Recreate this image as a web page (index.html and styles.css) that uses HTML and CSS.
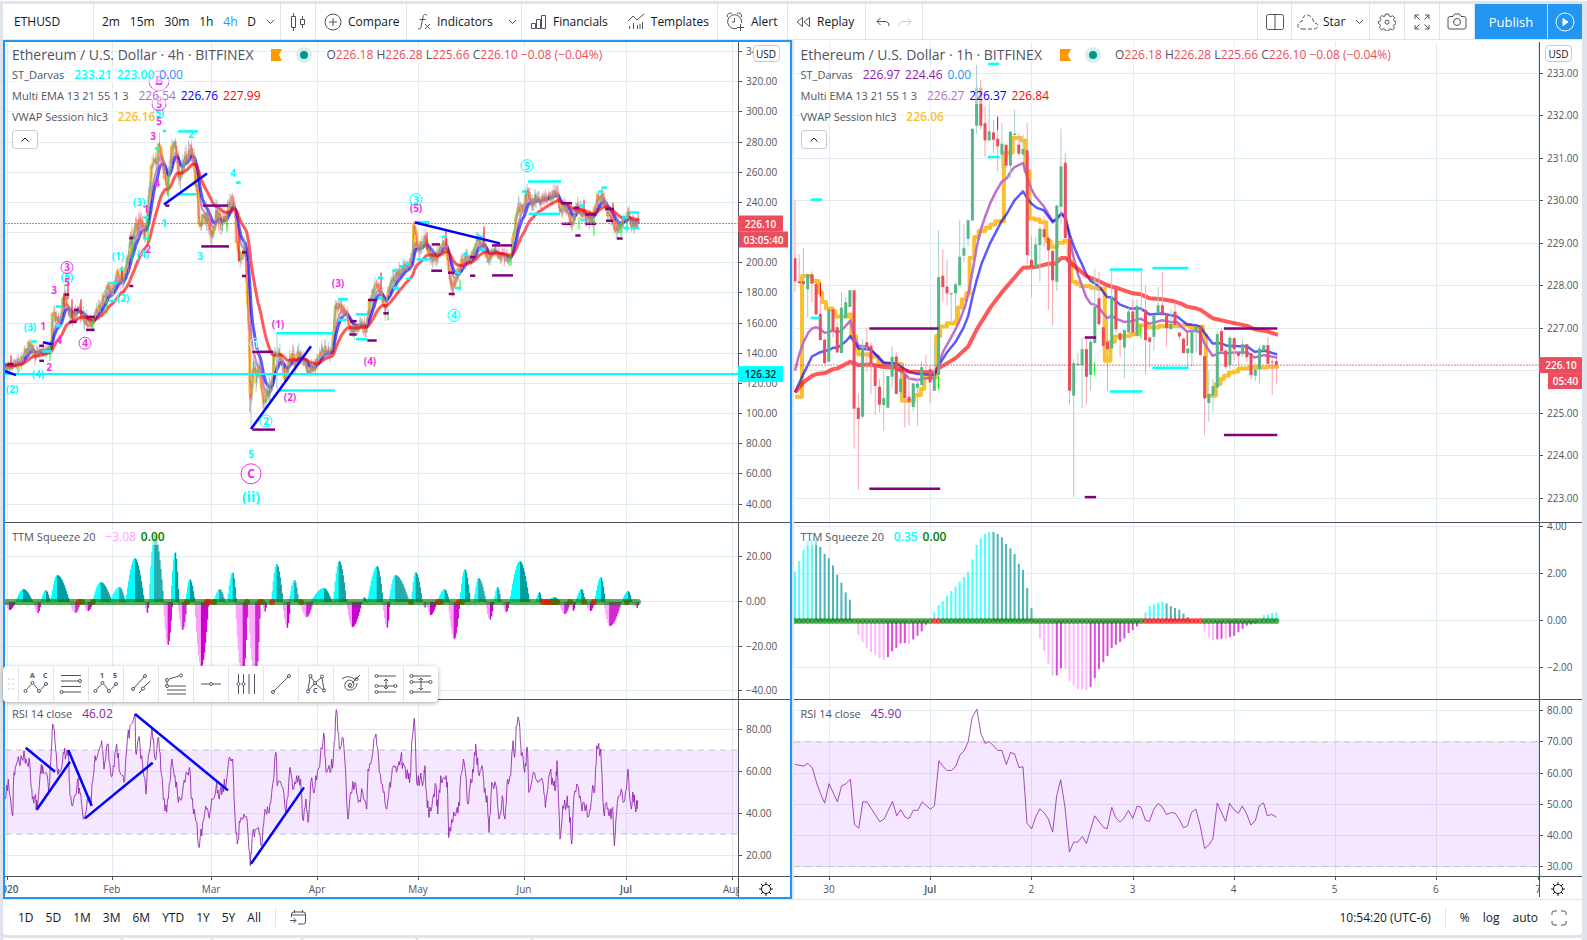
FILE: index.html
```html
<!DOCTYPE html>
<html lang="en">
<head>
    <meta charset="UTF-8">
    <meta name="viewport" content="width=device-width, initial-scale=1.0">
    <title>ETHUSD 226.10</title>
    <link rel="stylesheet" href="styles.css">
</head>
<body>
    <header class="toolbar">
        <div class="group symbol"><button>ETHUSD</button></div>
        <div class="group intervals">
            <button>2m</button>
            <button>15m</button>
            <button>30m</button>
            <button>1h</button>
            <button class="active">4h</button>
            <button>D</button>
            <button aria-label="More intervals"><svg width="9" height="6" viewBox="0 0 9 6"><path d="M1 1l3.500 3.500L8 1"/></svg></button>
        </div>
        <div class="group square">
            <button aria-label="Chart style"><svg width="16" height="20" viewBox="0 0 16 20"><path d="M3.500 1v3M3.500 16v3M12.500 4v3M12.500 13v3M1.500 4.500h4v11h-4zM10.500 7.500h4v5h-4z"/></svg></button>
        </div>
        <div class="group compare">
            <button><svg width="18" height="18" viewBox="0 0 18 18"><circle cx="9" cy="9" r="8"/><path d="M9 5v8M5 9h8"/></svg>Compare</button>
        </div>
        <div class="group indicators">
            <button><svg width="14" height="18" viewBox="0 0 14 18"><path d="M10 2.500C8 .5 6.500 1.500 6 4L4 14c-.5 2-1.500 2.500-3 1.500M2.500 6.500h6M8 11l5 5M13 11l-5 5"/></svg>Indicators</button>
            <button aria-label="Favorite indicators"><svg width="9" height="6" viewBox="0 0 9 6"><path d="M1 1l3.500 3.500L8 1"/></svg></button>
        </div>
        <div class="group wide">
            <button><svg width="17" height="16" viewBox="0 0 17 16"><path d="M1.500 9.500h4v5h-4zM6.500 5.500h4v9h-4zM11.500 1.500h4v13h-4z"/></svg>Financials</button>
            <button><svg width="18" height="17" viewBox="0 0 18 17"><path d="M1 8l5-5 4 4 7-6M2.500 13v3M6.500 10v6M10.500 12v4M15.500 9v7M13 11v5"/></svg>Templates</button>
        </div>
        <div class="group alert">
            <button><svg width="19" height="19" viewBox="0 0 19 19"><path d="M11 16.300A7 7 0 1 1 15.500 11M8.500 6v4H6M1.500 5A3 3 0 0 1 6 1.500M11 1.500A3 3 0 0 1 15.500 5M14.500 12v7M11 15.500h7"/></svg>Alert</button>
        </div>
        <div class="group replay">
            <button><svg width="15" height="12" viewBox="0 0 15 12"><path d="M6.500 1.500v9L1 6zM13.500 1.500v9L8 6z"/></svg>Replay</button>
        </div>
        <div class="group history">
            <button aria-label="Undo"><svg width="14" height="10" viewBox="0 0 14 10"><path d="M4.500 1L1 4.500 4.500 8M1 4.500h8c2.500 0 4 1.500 4 4.500"/></svg></button>
            <button class="off" aria-label="Redo"><svg width="14" height="10" viewBox="0 0 14 10"><path d="M9.500 1L13 4.500 9.500 8M13 4.500H5C2.500 4.500 1 6 1 9"/></svg></button>
        </div>
        <div class="spacer"></div>
        <div class="group square">
            <button aria-label="Select layout"><svg width="18" height="16" viewBox="0 0 18 16"><rect x=".5" y=".5" width="17" height="15" rx="2"/><path d="M9 1v14"/></svg></button>
        </div>
        <div class="group layout">
            <button><svg width="22" height="16" viewBox="0 0 22 16" stroke-dasharray="4 2"><path d="M5 15h12c6-1 5-6 0-6C16 4 13 1 10 1S5 4 5.500 7C0 8-1 14 5 15z"/></svg>Star</button>
            <button aria-label="Layouts"><svg width="9" height="6" viewBox="0 0 9 6"><path d="M1 1l3.500 3.500L8 1"/></svg></button>
        </div>
        <div class="group square">
            <button aria-label="Chart settings"><svg width="18" height="18" viewBox="0 0 18 18"><path d="M7.500 1h3l.6 2 1.500.7 2-1 2 2-1 2 .6 1.400 1.800.6v2l-1.900.8-.6 1.400 1 2-2 2-2-1-1.400.6-.6 1.500h-3l-.6-1.700-1.500-.6-2 1-2-2 1-2-.6-1.400L.5 10.500v-2l1.800-.7.6-1.300-1-2 2-2 2 1L7 3zM11 9.200a2 2 0 1 1-4 0 2 2 0 0 1 4 0z"/></svg></button>
        </div>
        <div class="group square">
            <button aria-label="Fullscreen"><svg width="16" height="16" viewBox="0 0 16 16"><path d="M1 5V1h4M1 1l4.500 4.500M11 1h4v4M15 1l-4.500 4.500M1 11v4h4M1 15l4.500-4.500M15 11v4h-4M15 15l-4.500-4.500"/></svg></button>
        </div>
        <div class="group square">
            <button aria-label="Take a snapshot"><svg width="20" height="17" viewBox="0 0 20 17"><path d="M3 3.500h3L7.500 1h5L14 3.500h3a2 2 0 0 1 2 2V14a2 2 0 0 1-2 2H3a2 2 0 0 1-2-2V5.500a2 2 0 0 1 2-2z"/><circle cx="10" cy="9" r="3.500"/></svg></button>
        </div>
        <button class="publish">Publish</button>
        <button class="publish play" aria-label="Start stream"><svg width="20" height="20" viewBox="0 0 20 20"><circle cx="10" cy="10" r="9"/><path d="M8 6.500v7l5-3.500z" fill="#fff"/></svg></button>
    </header>

    <main class="charts">
        <section class="chart selected" id="left">
            <div class="pane price">
                <svg class="plot"></svg>
                <div class="legend">
                    <div class="title-row">
                        <h2>Ethereum / U.S. Dollar · 4h · BITFINEX</h2>
                        <svg width="11" height="12" viewBox="0 0 11 12"><path d="M0 0h11L8 6l3 6H0z" fill="#ff9800"/></svg>
                        <i class="status"></i>
                        <p class="ohlc">O<b>226.18</b> H<b>226.28</b> L<b>225.66</b> C<b>226.10</b> <b>−0.08 (−0.04%)</b></p>
                    </div>
                    <p>ST_Darvas <span class="aqua strong first">233.21</span> <span class="aqua strong">223.00</span> <span class="blue">0.00</span></p>
                    <p>Multi EMA 13 21 55 1 3 <span class="violet first">226.54</span> <span class="navy">226.76</span> <span class="red">227.99</span></p>
                    <p>VWAP Session hlc3 <span class="gold strong first">226.16</span></p>
                    <button class="fold" aria-label="Collapse legend"><svg width="8" height="5" viewBox="0 0 8 5"><path d="M.5 4.500L4 1l3.500 3.500"/></svg></button>
                </div>
                <button class="currency">USD</button>
            </div>
            <div class="pane">
                <svg class="plot"></svg>
                <div class="legend"><p>TTM Squeeze 20 <span class="pink first">−3.08</span> <span class="green strong">0.00</span></p></div>
            </div>
            <div class="pane">
                <svg class="plot"></svg>
                <div class="legend"><p>RSI 14 close <span class="purple first">46.02</span></p></div>
            </div>
            <div class="pane time">
                <svg class="plot"></svg>
                <button class="gear" aria-label="Axis settings"><svg width="14" height="14" viewBox="0 0 14 14"><circle cx="7" cy="7" r="4.500"/><path d="M7 0v2.500M7 11.500V14M0 7h2.500M11.500 7H14M2 2l2 2M10 10l2 2M12 2l-2 2M4 10l-2 2"/></svg></button>
            </div>
        </section>
        <section class="chart" id="right">
            <div class="pane price">
                <svg class="plot"></svg>
                <div class="legend">
                    <div class="title-row">
                        <h2>Ethereum / U.S. Dollar · 1h · BITFINEX</h2>
                        <svg width="11" height="12" viewBox="0 0 11 12"><path d="M0 0h11L8 6l3 6H0z" fill="#ff9800"/></svg>
                        <i class="status"></i>
                        <p class="ohlc">O<b>226.18</b> H<b>226.28</b> L<b>225.66</b> C<b>226.10</b> <b>−0.08 (−0.04%)</b></p>
                    </div>
                    <p>ST_Darvas <span class="purple first">226.97</span> <span class="purple">224.46</span> <span class="blue">0.00</span></p>
                    <p>Multi EMA 13 21 55 1 3 <span class="violet first">226.27</span> <span class="navy">226.37</span> <span class="red">226.84</span></p>
                    <p>VWAP Session hlc3 <span class="gold strong first">226.06</span></p>
                    <button class="fold" aria-label="Collapse legend"><svg width="8" height="5" viewBox="0 0 8 5"><path d="M.5 4.500L4 1l3.500 3.500"/></svg></button>
                </div>
                <button class="currency">USD</button>
            </div>
            <div class="pane">
                <svg class="plot"></svg>
                <div class="legend"><p>TTM Squeeze 20 <span class="aqua strong first">0.35</span> <span class="green strong">0.00</span></p></div>
            </div>
            <div class="pane">
                <svg class="plot"></svg>
                <div class="legend"><p>RSI 14 close <span class="purple first">45.90</span></p></div>
            </div>
            <div class="pane time">
                <svg class="plot"></svg>
                <button class="gear" aria-label="Axis settings"><svg width="14" height="14" viewBox="0 0 14 14"><circle cx="7" cy="7" r="4.500"/><path d="M7 0v2.500M7 11.500V14M0 7h2.500M11.500 7H14M2 2l2 2M10 10l2 2M12 2l-2 2M4 10l-2 2"/></svg></button>
            </div>
        </section>

        <!-- floating favorites toolbar -->
        <div class="drawing-tools">
            <span class="handle"><svg width="6" height="12" viewBox="0 0 6 12"><path d="M0 1h2M4 1h2M0 6h2M4 6h2M0 11h2M4 11h2" stroke="#c1c4cd"/></svg></span>
            <button aria-label="Elliott correction wave"><svg width="26" height="22" viewBox="0 0 26 22"><path d="M3.500 16.500L8 11.500M11 11.500l4 5M18 16.500l4-4.500"/><circle cx="2.500" cy="18" r="1.500"/><circle cx="9.500" cy="10" r="1.500"/><circle cx="16" cy="18" r="1.500"/><circle cx="23" cy="11" r="1.500"/><text x="7" y="5">A</text><text x="20" y="5">C</text></svg></button>
            <button aria-label="Fib retracement"><svg width="24" height="20" viewBox="0 0 24 20"><path d="M2 1.500h20M2 7h18M2 12.500h20M4 18h18"/><circle cx="21" cy="7" r="1.500"/><circle cx="2.500" cy="18" r="1.500"/></svg></button>
            <button aria-label="Elliott impulse wave"><svg width="26" height="22" viewBox="0 0 26 22"><path d="M3.500 16.500L8 11.500M11 11.500l4 5M18 16.500l4-4.500"/><circle cx="2.500" cy="18" r="1.500"/><circle cx="9.500" cy="10" r="1.500"/><circle cx="16" cy="18" r="1.500"/><circle cx="23" cy="11" r="1.500"/><text x="7" y="5">1</text><text x="20" y="5">5</text></svg></button>
            <button aria-label="Parallel channel"><svg width="20" height="20" viewBox="0 0 20 20"><path d="M3 14L13 3M8 19l3-3M13 13l6-6"/><circle cx="2" cy="15" r="1.500"/><circle cx="14" cy="2" r="1.500"/><circle cx="12" cy="14.500" r="1.500"/></svg></button>
            <button aria-label="Trend based fib"><svg width="22" height="22" viewBox="0 0 22 22"><path d="M4 6l10-3M2 8.500v3M4 13h17M2 17h19M2 21h19"/><circle cx="2" cy="7" r="1.500"/><circle cx="16" cy="2.500" r="1.500"/><circle cx="2" cy="13" r="1.500"/></svg></button>
            <button aria-label="Horizontal line"><svg width="20" height="6" viewBox="0 0 20 6"><path d="M0 3h8M12 3h8"/><circle cx="10" cy="3" r="1.500"/></svg></button>
            <button aria-label="Fib time zone"><svg width="20" height="20" viewBox="0 0 20 20"><path d="M2.500 0v8M2.500 12v8M7.500 0v8M7.500 12v8M13 0v20M18.500 0v20"/><circle cx="2.500" cy="10" r="1.500"/><circle cx="7.500" cy="10" r="1.500"/></svg></button>
            <button aria-label="Trend line"><svg width="20" height="20" viewBox="0 0 20 20"><path d="M3 17L17 3"/><circle cx="2" cy="18" r="1.500"/><circle cx="18" cy="2" r="1.500"/></svg></button>
            <button aria-label="Cypher pattern"><svg width="20" height="20" viewBox="0 0 20 20"><path d="M2 16L4 3.500M5 3l3.500 5M10 8l5-4M16 4l2 12M3 16l5-6M17 16l-7-6"/><circle cx="2" cy="17.500" r="1.500"/><circle cx="4.500" cy="2" r="1.500"/><circle cx="9" cy="9" r="1.500"/><circle cx="16" cy="2.500" r="1.500"/><circle cx="18" cy="16.500" r="1.500"/><text x="7" y="19">C</text></svg></button>
            <button aria-label="Fib spiral"><svg width="20" height="20" viewBox="0 0 20 20"><path d="M1 5c5-4 11-2 13 1M19 1l-8 8M10 10c-1-2-4 1-2 3s5 0 5-3-4-5-7-3-3 8 1 9 9-2 9-7"/><circle cx="9" cy="11" r="1.500"/><circle cx="15.500" cy="5" r="1.500"/></svg></button>
            <button aria-label="Long position"><svg width="24" height="20" viewBox="0 0 24 20"><path d="M4 2h18M4 12h16M4 18h18M12 5v10M10 7l2-2 2 2M10 13l2 2 2-2"/><circle cx="2.500" cy="2" r="1.500"/><circle cx="2.500" cy="12" r="1.500"/><circle cx="2.500" cy="18" r="1.500"/><circle cx="21.500" cy="12" r="1.500"/></svg></button>
            <button aria-label="Short position"><svg width="24" height="20" viewBox="0 0 24 20"><path d="M4 2h18M4 8h16M4 18h18M12 4v12M10 6l2-2 2 2M10 14l2 2 2-2"/><circle cx="2.500" cy="2" r="1.500"/><circle cx="2.500" cy="8" r="1.500"/><circle cx="2.500" cy="18" r="1.500"/><circle cx="21.500" cy="8" r="1.500"/></svg></button>
        </div>
    </main>

    <footer class="bottom-bar">
        <div class="ranges">
            <button>1D</button>
            <button>5D</button>
            <button>1M</button>
            <button>3M</button>
            <button>6M</button>
            <button>YTD</button>
            <button>1Y</button>
            <button>5Y</button>
            <button>All</button>
        </div>
        <button class="goto" aria-label="Go to date"><svg width="16" height="15" viewBox="0 0 16 15"><path d="M1.500 7V4a2 2 0 0 1 2-2h10a2 2 0 0 1 2 2v8a2 2 0 0 1-2 2H8M1.500 5h14M4.500 0v3M12.500 0v3M0 10.500h6M3.500 8L6 10.500 3.500 13"/></svg></button>
        <div class="spacer"></div>
        <button>10:54:20 (UTC-6)</button>
        <div class="scales">
            <button>%</button>
            <button>log</button>
            <button>auto</button>
            <button aria-label="Maximize chart"><svg width="16" height="16" viewBox="0 0 16 16"><path d="M1 5V3a2 2 0 0 1 2-2h3M10 1h3a2 2 0 0 1 2 2v2M15 11v2a2 2 0 0 1-2 2h-3M6 15H3a2 2 0 0 1-2-2v-2"/></svg></button>
        </div>
    </footer>
    <div class="tab-strip"><i></i><i></i><i></i><i></i><i></i><i></i></div>

    <script src="charts.js"></script>
</body>
</html>
```
FILE: styles.css
```css
* {
    box-sizing: border-box;
}
body {
    margin: 0;
    height: 100vh;
    min-height: 600px;
    padding: 3px 5px 0 3px;
    display: flex;
    flex-direction: column;
    background-color: #e0e3eb;
    color: #131722;
    font-family: "Open Sans", "Noto Sans", sans-serif;
    font-size: 12px;
    line-height: 16px;
    border-top: 1px solid #fff;
    overflow: hidden;
}
button {
    margin: 0;
    padding: 0;
    border: none;
    background: none;
    color: inherit;
    font: inherit;
    display: inline-flex;
    align-items: center;
    justify-content: center;
    white-space: nowrap;
    cursor: pointer;
}
svg {
    display: block;
    flex-shrink: 0;
}
button svg, .handle svg {
    fill: none;
    stroke: #50535e;
}
.spacer {
    flex: 1;
}

/* Top toolbar */
.toolbar {
    display: flex;
    height: 36px;
    flex-shrink: 0;
    background-color: #fff;
    border-bottom: 1px solid #e0e3eb;
}
.group {
    display: flex;
    align-items: center;
    justify-content: space-between;
    padding: 0 8px;
    border-right: 1px solid #e0e3eb;
}
.spacer + .group {
    border-left: 1px solid #e0e3eb;
}
.symbol {
    width: 91px;
    padding-left: 11px;
}
.intervals {
    width: 187px;
    padding-right: 5px;
}
.intervals .active {
    color: #2196f3;
}
.square {
    width: 35px;
    justify-content: center;
    padding: 0;
}
.group button {
    gap: 6px;
}
.compare {
    width: 91px;
}
.indicators {
    width: 115px;
    padding: 0 4px 0 10px;
}
.wide {
    width: 196px;
}
.alert {
    width: 70px;
}
.replay {
    width: 78px;
}
.history {
    width: 57px;
    padding: 0 10px;
}
.off {
    opacity: 0.3;
}
.layout {
    width: 78px;
    padding: 0 5px;
}
.group.layout button {
    gap: 4px;
}
.publish {
    width: 72px;
    background-color: #2196f3;
    color: #fff;
    font-size: 13px;
}
.publish svg {
    stroke: #fff;
}
.play {
    width: 35px;
    border-left: 1px solid #bbdefb;
}

/* Charts */
.charts {
    flex: 1;
    min-height: 0;
    display: grid;
    grid-template-columns: 1fr 1fr;
    gap: 2px;
    position: relative;
}
.chart {
    min-width: 0;
    min-height: 0;
    display: flex;
    flex-direction: column;
    background-color: #fff;
    border: 2px solid #fff;
    border-width: 2px 0;
}
.selected {
    border: 2px solid #2196f3;
}
.pane {
    position: relative;
    flex: 177 1 0;
    min-height: 0;
    border-bottom: 1px solid #50535e;
}
.price {
    flex-grow: 482;
}
.time {
    flex: 0 0 20px;
    border-bottom: none;
}
.plot {
    width: 100%;
    height: 100%;
    overflow: hidden;
    font-size: 10px;
    fill: #50535e;
}
.legend {
    position: absolute;
    left: 7px;
    top: 6px;
    color: #50535e;
}
.price .legend {
    top: 3px;
}
.legend p {
    margin: 0;
    width: max-content;
    background-color: rgba(255, 255, 255, 0.5);
    font-size: 11px;
}
.legend span {
    margin-left: 2px;
    font-size: 12px;
}
.price .legend p {
    margin-bottom: 5px;
}
.price .legend .title-row, .price .legend .ohlc {
    margin: 0;
}
.title-row {
    display: flex;
    align-items: center;
    height: 20px;
    gap: 18px;
    white-space: nowrap;
}
.title-row h2 {
    margin: 0;
    font-size: 14px;
    font-weight: normal;
    line-height: 20px;
}
.price .legend .title-row + p {
    margin-top: 2px;
}
.legend .ohlc {
    font-size: 12px;
}
.ohlc b {
    color: #eb4d5c;
    font-weight: normal;
}
.status {
    width: 8px;
    height: 8px;
    border-radius: 50%;
    background-color: #009688;
    box-shadow: 0 0 0 4px #d9efed;
}
.legend .first {
    margin-left: 7px;
}
.strong {
    font-weight: 600;
}
.aqua {
    color: #00ffff;
}
.blue {
    color: #2196f3;
}
.violet {
    color: #ba68c8;
}
.navy {
    color: #0000ff;
}
.red {
    color: #ff0000;
}
.gold {
    color: #fbc02d;
}
.pink {
    color: #ff9dff;
}
.green {
    color: #008000;
}
.purple {
    color: #8e24aa;
}
.fold {
    width: 26px;
    height: 19px;
    border: 1px solid #c9cbd6;
    border-radius: 3px;
    background-color: #fff;
}
.fold svg {
    stroke: #131722;
}
.currency {
    position: absolute;
    right: 10px;
    top: 3px;
    width: 27px;
    height: 17px;
    border: 1px solid #c9cbd6;
    border-radius: 4px;
    background-color: #fff;
    font-size: 10px;
}
.gear {
    position: absolute;
    right: 17px;
    top: 5px;
}
.gear svg {
    stroke: #131722;
}

/* Floating drawing tools */
.drawing-tools {
    position: absolute;
    left: 0;
    bottom: 197px;
    display: flex;
    height: 36px;
    background-color: #fff;
    border-radius: 4px;
    box-shadow: 0 1px 4px rgba(0, 0, 0, 0.35);
}
.drawing-tools button {
    width: 35px;
    border-left: 1px solid #e0e3eb;
}
.drawing-tools text {
    font-size: 7px;
    font-weight: bold;
    fill: #50535e;
    stroke: none;
}
.handle {
    width: 15px;
    display: flex;
    align-items: center;
    justify-content: center;
}

/* Bottom bar */
.bottom-bar {
    display: flex;
    align-items: center;
    height: 35px;
    flex-shrink: 0;
    margin-top: 1px;
    padding: 0 15px;
    background-color: #fff;
    border-radius: 0 0 4px 4px;
}
.ranges {
    display: flex;
    gap: 12px;
}
.goto {
    margin-left: 14px;
    padding-left: 14px;
    height: 19px;
    border-left: 1px solid #e0e3eb;
}
.scales {
    display: flex;
    gap: 13px;
    height: 19px;
    margin-left: 14px;
    padding-left: 14px;
    border-left: 1px solid #e0e3eb;
}
.tab-strip {
    display: flex;
    gap: 2px;
    height: 2px;
    flex-shrink: 0;
    margin-top: 3px;
}
.tab-strip i {
    width: 113px;
    border-radius: 3px 3px 0 0;
    background-color: #fff;
}
.tab-strip i:first-child {
    width: 118px;
}
.tab-strip i:nth-child(2), .tab-strip i:nth-child(3) {
    width: 88px;
}
.tab-strip i:last-child {
    flex: 1;
}
```
FILE: charts.js
```js
// Every pane is laid out on a base grid and scaled to its real size when drawn.
const AQUA = '#00ffff', PURPLE = '#800080', MAGENTA = '#f032e6';
const UP = '#53b987', DOWN = '#eb4d5c';

// flat list of x,y in thirds of a base unit, counted from an origin
function pts(list, ox, oy) {
    const out = [];
    for (let i = 0; i < list.length; i += 2) out.push([ox + list[i] / 3, oy + list[i + 1] / 3]);
    return out;
}

let seed = 7;
function rnd() {
    seed = (seed * 16807) % 2147483647;
    return seed / 2147483647 - 0.5;
}

function valueAt(path, x) {
    let i = 1;
    while (i < path.length - 1 && path[i][0] < x) i++;
    const [x0, y0] = path[i - 1], [x1, y1] = path[i];
    return y0 + (y1 - y0) * Math.min(1, Math.max(0, (x - x0) / (x1 - x0)));
}

class Pane {
    constructor(el, x0, y0, plotW, axisW, h) {
        this.svg = el.querySelector('.plot');
        const box = this.svg.getBoundingClientRect();
        this.w = Math.round(box.width - axisW);
        this.full = box.width;
        this.h = box.height;
        this.kx = this.w / plotW;
        this.ky = box.height / h;
        this.x0 = x0;
        this.y0 = y0;
        this.html = '';
    }
    x(v) { return +((v - this.x0) * this.kx).toFixed(1); }
    y(v) { return +((v - this.y0) * this.ky).toFixed(1); }
    line(x1, y1, x2, y2, color, width = 1, extra = '') {
        this.html += `<line x1="${this.x(x1)}" y1="${this.y(y1)}" x2="${this.x(x2)}" y2="${this.y(y2)}" stroke="${color}" stroke-width="${width}" ${extra}/>`;
    }
    path(list, color, width, opacity = 1) {
        const d = list.map(p => this.x(p[0]) + ',' + this.y(p[1])).join(' ');
        this.html += `<polyline points="${d}" fill="none" stroke="${color}" stroke-width="${width}" stroke-opacity="${opacity}" stroke-linejoin="round"/>`;
    }
    steps(list, color, width) {
        const out = [];
        list.forEach((p, i) => {
            if (i) out.push([p[0], list[i - 1][1]]);
            out.push(p);
        });
        this.path(out, color, width);
    }
    rect(x, y, w, h, color, extra = '') {
        this.html += `<rect x="${this.x(x)}" y="${this.y(y)}" width="${w * this.kx}" height="${Math.max(1, h * this.ky)}" fill="${color}" ${extra}/>`;
    }
    text(x, y, str, color, size = 10, weight = 'bold') {
        this.html += `<text x="${this.x(x)}" y="${this.y(y) + 4}" fill="${color}" font-size="${size}" font-weight="${weight}" text-anchor="middle">${str}</text>`;
    }
    ring(x, y, str, color, r = 6, size = 10) {
        this.html += `<circle cx="${this.x(x)}" cy="${this.y(y)}" r="${r}" fill="none" stroke="${color}"/>`;
        this.text(x, y, str, color, size);
    }
    grid(xs, ys) {
        xs.forEach(v => this.html += `<path d="M${Math.round(this.x(v)) + 0.5} 0V${this.h}" stroke="#e1ecf2"/>`);
        ys.forEach(r => this.html += `<path d="M0 ${Math.round(this.y(r[0])) + 0.5}H${this.w}" stroke="#e1ecf2"/>`);
    }
    axis(ys) {
        this.html += `<rect x="${this.w}" width="${this.full - this.w}" height="${this.h}" fill="#fff"/><path d="M${this.w + 0.5} 0V${this.h}" stroke="#50535e"/>`;
        ys.forEach(r => {
            const y = Math.round(this.y(r[0]));
            this.html += `<path d="M${this.w} ${y + 0.5}h4" stroke="#50535e"/><text x="${this.w + 8}" y="${y + 4}">${r[1]}</text>`;
        });
    }
    tag(y, str, bg, color, left, width) {
        const top = this.y(y) - 8;
        this.html += `<rect x="${this.w + left}" y="${top}" width="${width}" height="16" fill="${bg}"/><text x="${this.w + left + width / 2}" y="${top + 12}" fill="${color}" font-weight="600" text-anchor="middle">${str}</text>`;
    }
    done() { this.svg.innerHTML = this.html; }
}

const rows = (first, step, y, dy, n) => Array.from({ length: n }, (_, i) => [y + dy * i, (first + step * i).toFixed(2).replace('-', '−')]);

// ---------- 4h chart ----------
const leftX = [7, 112, 211, 317, 418, 524, 626, 732];
const leftPrice = [[5,370],[12,366],[18,362],[22,360],[28,347],[31,347],[35,357],[42,350],[50,350],[53,315],[58,322],[60,316],[65,296],[68,311],[72,318],[78,309],[84,320],[92,325],[96,312],[103,300],[108,287],[112,294],[118,274],[124,280],[127,265],[131,240],[136,229],[140,222],[144,232],[147,228],[150,180],[153,155],[156,165],[159,140],[162,158],[166,180],[168,188],[172,145],[175,140],[179,178],[183,165],[187,160],[190,148],[194,162],[197,190],[200,233],[204,215],[208,220],[212,234],[216,213],[222,225],[227,218],[232,193],[235,210],[238,258],[241,260],[245,250],[247,290],[249,340],[250,395],[251,395],[253,365],[256,380],[259,366],[263,400],[270,390],[276,350],[280,355],[285,378],[290,357],[296,362],[300,357],[308,372],[315,366],[322,350],[332,352],[335,305],[340,308],[345,312],[350,328],[356,330],[362,325],[366,330],[367,322],[370,300],[373,295],[376,283],[380,290],[385,310],[390,285],[395,278],[402,268],[408,270],[412,255],[414,225],[418,250],[425,238],[430,258],[437,257],[443,245],[447,245],[449,280],[453,288],[458,275],[464,258],[470,262],[477,241],[484,243],[488,263],[495,250],[500,256],[506,261],[511,255],[514,230],[518,207],[523,210],[527,190],[531,205],[535,199],[542,200],[548,198],[557,192],[560,212],[567,207],[572,225],[577,207],[585,218],[592,220],[598,197],[602,196],[606,210],[612,218],[616,230],[622,225],[628,215],[632,224],[639,222]];
const leftBoxes = [
    [AQUA, [488,498,34, 534,594,35, 465,478,86, 536,588,224, 708,722,189, 430,446,294, 430,446,357, 94,110,667, 128,156,697, 168,186,562, 168,186,620, 328,352,491, 328,348,545, 358,370,450, 830,1002,642, 838,1004,814, 1014,1044,540, 1014,1040,602, 1068,1102,585, 1068,1102,660, 1134,1148,476, 1178,1194,454, 1180,1196,506]],
    [PURPLE, [496,508,258, 608,684,258, 604,687,381, 726,740,399, 726,738,470, 388,400,356, 388,400,500, 194,208,526, 222,236,572, 208,230,608, 260,284,593, 258,284,632, 118,132,680, 118,132,725, 22,40,735, 757,820,698, 757,825,932, 1050,1070,606, 1048,1070,646, 1104,1130,542, 1102,1130,664]]
];
const leftBoxes2 = [
    [AQUA, [166,208,308, 170,206,420, 98,114,454, 98,118,506, 116,130,440, 136,150,433, 138,154,478, 54,68,476, 54,68,536, 246,260,352, 280,300,460, 286,304,506, 310,324,403, 348,372,352, 356,376,391, 486,498,216, 504,603,186, 506,600,283, 658,674,258, 662,676,302, 714,726,216, 728,740,204, 786,806,294, 790,808,325, 810,838,279, 812,838,326]],
    [PURPLE, [215,240,375, 214,246,454, 264,284,460, 266,284,524, 330,346,413, 330,346,469, 396,456,378, 396,459,468, 70,86,582, 604,636,251, 606,634,313, 640,658,265, 646,662,348, 676,708,285, 676,708,313, 736,762,268, 738,760,304, 770,788,357]]
];
const leftRsi = [15,870,25,810,38,920,42,790,50,760,60,770,72,725,80,760,90,770,97,870,105,860,112,900,120,800,128,770,138,790,146,850,152,760,158,645,165,700,170,760,178,790,190,730,198,740,205,730,210,860,220,880,232,820,240,850,250,930,262,870,272,890,280,800,285,740,295,730,305,695,312,780,322,705,332,790,340,770,350,705,360,790,372,820,380,720,390,650,405,615,407,730,415,690,425,740,438,855,445,740,456,655,465,750,476,685,485,800,495,905,505,870,516,750,525,800,535,880,545,870,555,820,568,775,575,870,583,900,598,1015,608,940,620,900,630,910,640,870,650,820,658,870,668,830,678,830,690,745,698,750,704,900,712,1005,720,940,732,915,742,940,751,1070,758,970,768,960,778,975,787,1000,795,900,805,910,815,850,828,730,832,830,845,830,858,910,870,775,878,840,890,800,902,810,908,930,918,870,924,940,932,820,945,835,955,780,971,672,978,790,990,790,1000,750,1009,602,1018,720,1030,690,1044,930,1052,850,1065,820,1075,880,1088,850,1100,900,1104,780,1115,750,1128,675,1138,790,1150,850,1160,900,1168,830];
const leftRsi2 = [5,800,12,770,22,780,32,745,42,770,55,810,62,790,65,700,73,628,80,820,90,810,100,815,105,770,110,860,117,925,128,870,138,830,143,915,152,800,165,810,172,820,176,985,188,940,200,900,208,890,212,800,223,762,234,885,242,810,250,790,257,705,265,790,276,770,283,850,291,860,297,970,305,820,318,830,327,930,337,860,345,930,353,810,362,800,369,695,374,745,380,650,388,640,394,740,404,790,412,715,416,850,430,790,445,820,458,815,466,895,480,790,490,830,496,845,501,755,510,990,518,890,530,880,537,890,545,1005,552,860,563,830,573,880,585,905,600,900,606,850,614,850,620,710,632,720,641,910,650,880,658,920,668,895,673,1010,682,880,694,840,704,875,714,780,722,885,730,855,736,895,743,873];
// start, peak, end, height of every squeeze momentum hump
const humps = [
    [45,68,98,13],[120,136,150,12],[150,170,208,27],[275,300,335,20],[328,357,375,15],[375,403,432,44],[445,462,490,68],[510,524,536,50],[555,568,584,23],[640,657,674,13],[680,696,708,30],[812,828,848,38],[865,882,895,22],[930,970,995,14],[998,1016,1038,41],[1085,1090,1100,5],[1100,1130,1148,36],[1165,1184,1227,27],[1232,1245,1266,30],[1310,1332,1347,13],[1377,1393,1410,33],[1420,1434,1457,24],[1480,1491,1502,15],[1527,1558,1588,41],[1605,1617,1625,10],[1640,1660,1680,5],[1725,1743,1755,13],[1782,1801,1815,25],[1863,1883,1895,11],
    [15,27,45,-8],[98,112,122,-11],[208,224,240,-11],[248,262,278,-9],[432,440,446,-11],[488,502,516,-43],[532,546,560,-28],[582,602,625,-65],[704,726,742,-80],[742,765,780,-80],[785,792,800,-10],[846,860,870,-26],[898,918,938,-15],[1038,1055,1085,-25],[1146,1160,1168,-26],[1265,1272,1278,-6],[1278,1290,1310,-13],[1343,1361,1378,-37],[1455,1468,1480,-18],[1505,1517,1527,-10],[1675,1692,1710,-12],[1710,1718,1726,-9],[1755,1770,1782,-9],[1810,1828,1863,-24],[1895,1910,1915,-6]
];

function drawLeft() {
    seed = 7;
    const panes = document.querySelectorAll('#left .pane');
    const prices = rows(340, -20, 51, 30.25, 16);
    let p = new Pane(panes[0], 5, 42, 733, 52, 481);
    p.grid(leftX, prices);

    const bars = [];
    let open = 370;
    for (let x = 5; x <= 639; x += 0.568) {
        const close = valueAt(leftPrice, x) + rnd() * (x > 120 && x < 300 ? 14 : 9);
        bars.push([x, open, close]);
        open = close;
    }
    // session vwap restarts every six bars
    const vwap = [];
    for (let i = 0; i < bars.length; i += 6) {
        const day = bars.slice(i, i + 6);
        day.forEach((b, n) => vwap.push([b[0] - 0.5, day.slice(0, n + 1).reduce((s, d) => s + d[2], 0) / (n + 1)]));
    }
    p.steps(vwap, '#fbc02d', 3);
    const ema = len => {
        let v = bars[0][2];
        return bars.map(b => [b[0], v += (b[2] - v) * 2 / (len + 1)]);
    };
    p.path(ema(13), '#ba68c8', 2, 0.8);
    p.path(ema(21), '#0000ff', 3, 0.65);
    bars.forEach(([x, o, c]) => {
        const reach = x > 120 && x < 300 ? 16 : 9;
        p.line(x, Math.min(o, c) - 3 + rnd() * reach, x, Math.max(o, c) + 3 + rnd() * reach, c < o ? '#7fb3ab' : '#f08a94', 1, 'stroke-opacity=".6"');
        p.line(x, o, x, c + 1, c < o ? UP : DOWN, 1, 'stroke-opacity=".6"');
    });
    p.path(ema(55), '#ff0000', 3, 0.65);
    [[250,395,413,DOWN],[251,400,430,'#a9cdcb'],[277,334,390,'#a9cdcb'],[68,284,300,'#ff0000'],[72,300,322,'#ff0000'],[81,300,316,'#ff0000'],[64,294,308,'#ff0000'],[11,356,366,'#ff0000'],[122,267,280,'#ff0000'],[239,230,262,'#ff0000'],[427,233,250,'#ff0000'],[446,230,246,'#ff0000'],[484,227,242,'#ff0000'],[381,273,290,'#ff0000'],[584,200,214,'#ff0000'],[613,203,216,'#ff0000'],[18,366,376,'#00ff00'],[50,344,362,'#00ff00'],[93,318,332,'#00ff00'],[107,300,315,'#00ff00'],[148,220,245,'#00ff00'],[168,180,196,'#00ff00'],[132,240,262,'#00ff00'],[227,218,232,'#00ff00'],[388,310,321,'#00ff00'],[511,255,266,'#00ff00'],[460,280,291,'#00ff00'],[594,220,236,'#00ff00'],[579,218,230,'#00ff00'],[621,224,237,'#00ff00'],[627,222,233,'#00ff00']].forEach(m => p.line(m[0], m[1], m[0], m[2], m[3]));

    [[leftBoxes, 0], [leftBoxes2, 360]].forEach(([sets, ox]) => sets.forEach(([color, v]) => {
        for (let i = 0; i < v.length; i += 3) p.line(ox + v[i] / 3, 120 + v[i + 2] / 3, ox + v[i + 1] / 3, 120 + v[i + 2] / 3, color, 2.5);
    }));
    p.line(5, 375, 738, 375, AQUA, 2);
    p.line(5, 224, 738, 224, DOWN, 1, 'stroke-dasharray="2 1" stroke-opacity=".8"');
    [[164,205,207,174],[251,430,311,347],[43,343,52,345],[5,372,16,376],[415,223,500,244]].forEach(l => p.line(...l, '#0000ff', 2.5));

    [[12,390,'(2)'],[30,328,'(3)'],[38,375,'(4)'],[118,257,'(1)'],[123,299,'(2)'],[139,202,'(3)'],[143,255,'(4)'],[67,278,'(5)'],[164,223,'1'],[191,134,'2'],[200,257,'3'],[233,173,'4'],[251,455,'5'],[158,113,'(5)']].forEach(t => p.text(t[0], t[1], t[2], AQUA));
    [[43,327,'1'],[49,368,'2'],[54,291,'3'],[59,341,'4'],[67,283,'5'],[146,209,'1'],[148,250,'2'],[153,136,'3'],[157,183,'4'],[159,121,'5'],[278,325,'(1)'],[290,398,'(2)'],[338,284,'(3)'],[370,362,'(4)'],[416,208,'(5)']].forEach(t => p.text(t[0], t[1], t[2], MAGENTA));
    [[266,422,2],[416,200,3],[454,316,4],[527,166,5]].forEach(t => p.ring(t[0], t[1], t[2], AQUA));
    p.ring(256, 345, 1, '#b3ffff');
    p.ring(67, 268, 3, MAGENTA);
    p.ring(85, 344, 4, MAGENTA);
    p.ring(159, 104, 5, MAGENTA, 7);
    p.ring(159, 81, 'B', MAGENTA, 10, 13);
    p.ring(251, 475, 'C', MAGENTA, 10, 12);
    p.text(251, 499, '(ii)', AQUA, 14);
    p.axis(prices);
    p.tag(224, '226.10', DOWN, '#fff', 0, 45);
    p.tag(240, '03:05:40', DOWN, '#fff', 1, 49);
    p.tag(375, '126.32', AQUA, '#131722', 0, 45);
    p.done();

    const squeeze = rows(20, -20, 557, 44.7, 4);
    p = new Pane(panes[1], 5, 524, 733, 52, 176);
    p.grid(leftX, squeeze);
    humps.forEach(([a, b, c, h]) => {
        for (let x = a; x < c; x += 3) {
            const rising = x < b;
            const t = rising ? (x - a) / (b - a) : (c - x) / (c - b);
            const v = h * Math.sin(t * Math.PI / 2);
            const color = h > 0 ? (rising ? AQUA : '#009e9e') : (rising ? '#ff9dff' : '#cc00cc');
            p.rect(x / 3, v > 0 ? 603 - v : 603, 1.2, Math.abs(v), color);
        }
    });
    p.line(5, 603, 638, 603, 'green', 6, 'stroke-opacity=".65" stroke-linecap="round"');
    [79,207,209,260,272,438,459,543,546,549,552,594].forEach(x => p.html += `<circle cx="${p.x(x)}" cy="${p.y(603)}" r="3" fill="#d32000" fill-opacity=".8"/>`);
    [82,93,187,214,247,262,301,411,441,462,554,557,570,584,627].forEach(x => p.html += `<circle cx="${p.x(x)}" cy="${p.y(603)}" r="3" fill="#4e6a00" fill-opacity=".9"/>`);
    p.axis(squeeze);
    p.done();

    const rsi = rows(80, -20, 730, 42.1, 4);
    p = new Pane(panes[2], 5, 701, 733, 52, 176);
    p.grid(leftX, rsi);
    p.rect(5, 751, 733, 84, '#9915ff', 'fill-opacity=".1"');
    [751, 835].forEach(y => p.line(5, y, 738, y, '#c3c3c8', 1, 'stroke-dasharray="6 5"'));
    const base = pts(leftRsi, 0, 510).concat(pts(leftRsi2, 390, 510));
    const wave = [];
    for (let i = 0; i < base.length - 1; i++) {
        wave.push(base[i]);
        for (let k = 1; k < 4; k++) {
            const x = base[i][0] + (base[i + 1][0] - base[i][0]) * k / 4;
            wave.push([x, valueAt(base, x) + rnd() * 15]);
        }
    }
    wave.push(base[base.length - 1]);
    p.path(wave, '#8e24aa', 1, 0.85);
    [[77,716,165,788],[110,902,210,758],[205,723,275,890],[255,928,458,761],[405,615,684,844],[753,1064,912,835]].forEach(l => p.path(pts(l, 0, 510), '#0000ff', 2.5));
    p.axis(rsi);
    p.done();

    drawTime(panes[3], 5, 733, 52, leftX, ['2020', 'Feb', 'Mar', 'Apr', 'May', 'Jun', 'Jul', 'Aug']);
}

function drawTime(el, x0, plotW, axisW, xs, names) {
    const p = new Pane(el, x0, 0, plotW, axisW, 20);
    xs.forEach((x, i) => {
        p.html += `<path d="M${Math.round(p.x(x)) + 0.5} 0v3" stroke="#50535e"/>`;
        p.text(x, 12, names[i], '#50535e', 10, /2020|Jul/.test(names[i]) ? 600 : 400);
    });
    p.axis([]);
    p.done();
}

// ---------- 1h chart ----------
const rightX = [829, 930, 1031, 1132, 1233, 1334, 1435, 1537];
// direction, body top, body bottom, wick top, wick bottom
const candles = `r416,486,240,518 r486,492,405,492 r486,494,386,540 g465,510,465,596 r465,493,456,550 r493,585,493,590 r584,663,490,663 r661,732,661,735 g570,728,570,728 r570,636,570,655
r624,700,610,700 g565,702,518,702 g549,597,533,597 g513,563,513,563 r513,869,513,990 r866,900,823,1112 g688,893,660,900 r669,685,625,757 r680,734,670,825 r735,801,735,887
r803,857,780,880 g837,858,755,935 g771,866,771,866 g713,773,682,805 r712,825,700,825 g779,820,760,830 r767,837,767,925 r833,848,770,920 g793,864,793,878 g794,806,775,920
g744,798,725,798 r755,758,708,760 r750,790,738,852 g773,815,680,815 g473,768,332,810 r469,503,390,545 r502,522,421,558 g521,525,521,605 g495,522,490,610 g412,498,303,500
g386,409,315,428 g302,358,302,380 g27,303,27,303 g-96,18,-165,43 r-96,18,-120,30 r10,62,-40,112 g35,62,-60,65 r38,60,0,100 r57,80,0,155 g72,105,10,145
r75,138,75,145 g36,138,33,175 g42,46,-30,46 r75,102,40,110 g88,105,45,105 r92,407,10,435 r421,443,348,533 g375,447,352,447 g328,377,320,487 r329,353,290,382
r355,393,350,572 r394,483,394,618 g258,487,255,515 g140,262,27,315 r129,356,100,356 r356,815,356,857 g732,830,720,1135 g734,738,700,740 g690,738,655,868 r690,773,650,857
g668,768,660,815 g563,672,448,672 r537,615,457,620 r624,680,600,690 r667,690,600,817 g533,688,455,688 r510,630,510,640 r642,662,640,714 g632,685,632,778 g577,640,565,640
r577,640,540,640 g560,650,540,650 g568,572,455,572 r572,663,500,765 r655,668,655,745 g590,653,590,695 g558,583,503,583 r558,588,457,588 r582,627,582,682 g613,630,570,630
r577,617,550,617 r640,652,640,662 r658,702,658,702 g688,702,688,750 g636,702,636,743 g622,640,622,700 r622,708,622,708 r711,838,711,950 g825,852,755,908 g801,830,780,880
g645,806,636,832 r636,696,627,696 r694,743,690,750 g656,738,648,750 r657,690,655,725 r700,710,700,740 g675,705,660,712 r675,714,675,728 r702,768,702,783 g751,770,730,786
g688,750,678,793 g678,695,678,695 r678,734,653,734 r727,729,720,828 r726,738,720,796`.split(/\s+/);
const ema13 = [15,755,25,715,40,670,55,640,66,628,78,624,91,630,104,641,117,638,129,634,142,640,154,634,167,620,181,604,193,655,206,680,231,682,243,692,260,710,281,735,307,735,319,750,345,765,356,778,382,783,400,778,432,776,445,735,460,695,480,660,496,630,510,600,525,560,534,525,547,455,560,380,572,330,585,290,600,250,615,220,634,187,650,175,660,158,672,143,698,130,710,170,723,208,736,232,760,260,787,305,800,300,813,280,826,295,838,360,850,415,863,465,875,500,888,535,901,553,912,556,925,565,950,597,963,590,977,598,1001,608,1027,605,1051,598,1076,613,1090,610,1115,603,1140,608,1160,608,1170,620,1189,637,1216,634,1228,640,1241,672,1266,710,1290,700,1304,703,1330,700,1370,700,1392,715,1420,708,1460,716];
const ema21 = [15,820,40,765,66,712,91,699,117,692,129,686,142,686,167,667,181,651,206,688,243,692,281,730,319,733,356,758,382,765,432,768,445,740,470,700,496,668,520,625,534,590,547,530,560,480,575,430,600,370,634,305,650,282,672,243,698,215,710,235,723,252,740,265,760,272,787,308,813,283,826,298,838,345,850,380,863,410,875,435,888,465,901,485,925,500,950,533,965,535,989,556,1020,568,1051,568,1078,586,1115,583,1160,592,1170,600,1189,615,1216,618,1230,622,1241,640,1266,673,1290,672,1310,680,1370,682,1392,698,1425,695,1460,706];
const ema55 = [15,820,40,790,66,770,80,765,105,762,129,750,142,748,181,728,206,738,243,736,281,744,319,746,356,757,432,760,445,748,496,717,534,682,560,630,600,565,634,520,672,475,698,445,736,443,774,433,795,432,813,416,826,416,850,438,888,470,925,485,950,498,977,505,1027,522,1051,525,1078,537,1115,540,1150,546,1170,552,1189,562,1216,567,1230,572,1266,597,1310,607,1370,620,1392,630,1425,635,1462,647];
const vwapRight = [15,833,36,470,66,485,86,520,96,548,108,568,128,575,136,592,175,586,184,650,198,690,205,706,240,712,265,735,330,735,335,845,370,845,372,828,392,810,402,775,438,650,450,622,470,612,496,605,503,565,515,540,528,522,538,415,552,353,565,335,585,325,600,315,615,305,640,305,641,100,655,98,667,55,692,62,705,155,718,297,733,300,748,308,768,365,781,382,800,370,820,365,835,425,843,487,857,493,870,500,900,505,920,508,943,725,960,668,973,652,1000,650,1020,645,1045,635,1048,618,1075,625,1105,620,1170,618,1200,625,1235,622,1237,648,1246,830,1275,795,1290,780,1300,770,1315,760,1330,757,1343,748,1375,745,1430,743,1460,740];
const rightRsi = [15,766,40,771,54,763,67,777,80,822,91,853,104,882,117,824,142,878,155,830,167,825,181,810,193,946,206,957,218,878,231,879,269,938,282,930,307,877,320,920,332,902,345,924,356,929,370,903,383,904,396,878,421,901,433,889,446,755,458,772,471,784,484,784,496,773,509,738,522,726,534,698,546,625,560,601,572,674,585,703,597,697,622,724,635,724,648,767,661,730,673,735,686,776,698,773,710,943,724,959,736,923,749,899,762,912,774,930,787,969,799,860,811,812,824,895,837,1029,850,999,862,999,876,982,888,1003,913,920,939,955,950,959,964,895,976,926,989,939,1001,927,1014,904,1027,928,1040,891,1051,894,1065,934,1077,937,1090,900,1103,883,1115,893,1128,916,1141,911,1153,911,1166,930,1179,956,1191,950,1203,910,1216,900,1229,950,1242,1018,1256,1006,1267,989,1280,882,1305,937,1317,883,1329,901,1343,913,1355,891,1368,914,1381,948,1394,935,1406,890,1419,881,1430,920,1443,916,1457,924];
const momentum = [188,156,123,95,93,95,114,135,148,169,197,221,250,272,336,378,399,417,429,437,447,453,444,426,417,403,402,404,391,380,367,347,336,310,288,276,259,246,232,218,204,188,151,108,88,74,69,69,74,85,105,118,135,164,183,237,297,340,388,426,464,499,499,478,479,516,529,540,541,543,534,507,480,459,441,417,407,399,388,372,363,352,336,310,291,285,281,278,283,291,297,302,313,324,336,336,336,367,384,393,391,389,390,384,380,369,359,350,346,343,336,318,317,312,310];
const barX = i => 795 + i * 4.217;

function drawRight() {
    const panes = document.querySelectorAll('#right .pane');
    const prices = rows(233, -1, 73, 42.6, 11);
    let p = new Pane(panes[0], 794, 42, 744, 44, 481);
    p.grid(rightX, prices);
    p.steps(pts(vwapRight, 790, 120), '#fbc02d', 4);
    p.path(pts(ema13, 790, 120), '#ba68c8', 2.5, 0.95);
    p.path(pts(ema21, 790, 120), '#0000ff', 2.5, 0.65);
    p.path(pts(ema55, 790, 120), '#ff0000', 4, 0.65);
    candles.forEach((c, i) => {
        const [top, bottom, high, low] = c.slice(1).split(',').map(v => 120 + v / 3);
        const up = c[0] === 'g';
        p.line(barX(i), high, barX(i), low, up ? '#a9cdcb' : '#f5a6ae');
        p.rect(barX(i) - 1.5, top, 3, bottom - top, up ? UP : DOWN);
    });
    [[AQUA, [62,96,240, 62,90,596, 592,628,112, 594,627,-168, 958,1056,450, 958,1056,817, 1086,1194,446, 1086,1194,746]],
     [PURPLE, [238,445,628, 238,450,1110, 883,917,655, 883,917,1135, 1300,1460,628, 1300,1460,948]]].forEach(([color, v]) => {
        for (let i = 0; i < v.length; i += 3) p.path(pts([v[i], v[i + 2], v[i + 1], v[i + 2]], 790, 120), color, 2.5);
    });
    [[91,490,532],[622,-10,30],[1190,640,680]].forEach(m => p.path(pts([m[0], m[1], m[0], m[2]], 790, 120), '#ff0000', 1));
    [[445,770,812],[912,730,768],[1051,617,657]].forEach(m => p.path(pts([m[0], m[1], m[0], m[2]], 790, 120), '#00ff00', 1));
    p.line(794, 366, 1538, 366, DOWN, 1, 'stroke-dasharray="2 1" stroke-opacity=".8"');
    p.axis(prices.filter(r => r[1] !== '226.00'));
    p.tag(366, '226.10', DOWN, '#fff', 0, 44);
    p.tag(382, '05:40', DOWN, '#fff', 9, 35);
    p.done();

    const squeeze = rows(4, -2, 527, 47, 4);
    p = new Pane(panes[1], 794, 524, 744, 44, 176);
    p.grid(rightX, squeeze);
    momentum.forEach((m, i) => {
        const v = 336 - m;
        const growing = Math.abs(v) > Math.abs(336 - (momentum[i - 1] || 336));
        const color = v > 0 ? (growing ? '#4dffff' : '#4db6b6') : (growing ? '#ffb8ff' : '#db4ddb');
        if (v) p.rect(barX(i) - 1, v > 0 ? 622 - v / 3 : 622, 2, Math.abs(v) / 3, color);
    });
    momentum.forEach((m, i) => {
        const squeezed = i === 33 || i === 34 || (i > 82 && i < 97);
        p.html += `<circle cx="${p.x(barX(i))}" cy="${p.y(622)}" r="3" fill="${squeezed ? 'red' : 'green'}" fill-opacity=".65"/>`;
    });
    p.axis(squeeze);
    p.done();

    const rsi = rows(80, -10, 711, 31.2, 6);
    p = new Pane(panes[2], 794, 701, 744, 44, 176);
    p.grid(rightX, rsi);
    p.rect(794, 743, 744, 125, '#9915ff', 'fill-opacity=".1"');
    [743, 867.5].forEach(y => p.line(794, y, 1538, y, '#c3c3c8', 1, 'stroke-dasharray="6 5"'));
    p.path(pts(rightRsi, 790, 510), '#8e24aa', 1, 0.8);
    p.axis(rsi);
    p.done();

    drawTime(panes[3], 794, 744, 44, rightX, ['30', 'Jul', '2', '3', '4', '5', '6', '7']);
}

function draw() {
    drawLeft();
    drawRight();
}
draw();
window.addEventListener('resize', draw);
```
